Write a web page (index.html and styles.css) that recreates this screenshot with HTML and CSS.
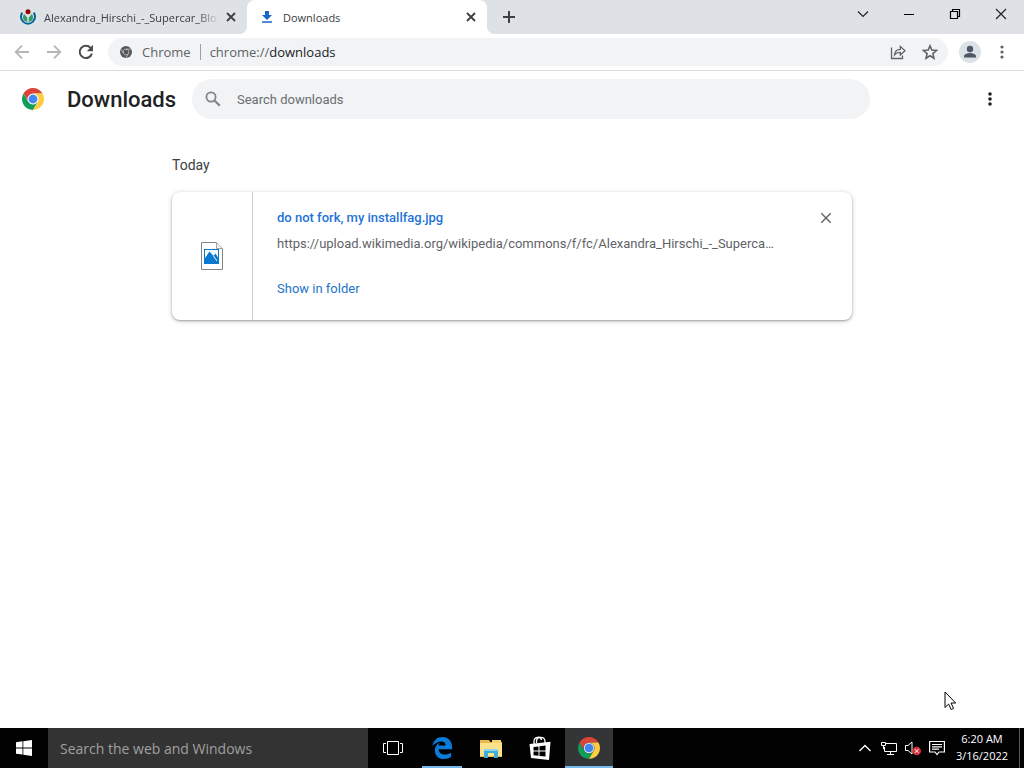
FILE: index.html
```html
<!DOCTYPE html>
<html lang="en">
<head>
    <meta charset="UTF-8">
    <meta name="viewport" content="width=device-width, initial-scale=1.0">
    <title>Downloads</title>
    <link rel="stylesheet" href="styles.css">
</head>
<body>
    <svg class="sprite" aria-hidden="true">
        <symbol id="chrome-logo" viewBox="2 2 44 44">
            <path fill="#db4437" d="M43.05 13H24A11 11 0 0 0 14.47 29.5L4.95 13A22 22 0 0 1 43.05 13Z"/>
            <path fill="#0f9d58" d="M4.95 13L14.47 29.5A11 11 0 0 0 33.53 29.5L24 46A22 22 0 0 1 4.95 13Z"/>
            <path fill="#ffcd40" d="M24 46L33.53 29.5A11 11 0 0 0 24 13H43.05A22 22 0 0 1 24 46Z"/>
            <circle cx="24" cy="24" r="10.5" fill="#e4e9f2"/>
            <circle cx="24" cy="24" r="8.6" fill="#4285f4"/>
        </symbol>
    </svg>

    <header class="tab-strip">
        <div class="tab tab-first">
            <svg class="icon-16" viewBox="0 0 16 16">
                <circle cx="8" cy="2.8" r="2.5" fill="#900"/>
                <path d="M2.3 3.6A7 7 0 1 0 13.7 3.6" fill="none" stroke="#069" stroke-width="2"/>
                <path d="M4.2 5A4.7 4.7 0 0 0 7.3 13V8.800Z M11.8 5A4.7 4.7 0 0 1 8.7 13V8.800Z" fill="#396"/>
            </svg>
            <a class="tab-title tab-fade" href="#">Alexandra_Hirschi_-_Supercar_Blondie</a>
            <button class="tab-close" aria-label="Close tab">
                <svg class="icon-16" viewBox="0 0 16 16"><path d="M4 4l8 8M12 4l-8 8" stroke="#3c4043" stroke-width="1.8"/></svg>
            </button>
        </div>
        <div class="tab tab-active">
            <svg class="icon-16" viewBox="0 0 16 16"><path d="M6 2h4v4h3l-5 5-5-5h3zM3 12.2h10v1.6H3z" fill="#1967c8"/></svg>
            <a class="tab-title" href="#">Downloads</a>
            <button class="tab-close" aria-label="Close tab">
                <svg class="icon-16" viewBox="0 0 16 16"><path d="M4 4l8 8M12 4l-8 8" stroke="#3c4043" stroke-width="1.8"/></svg>
            </button>
        </div>
        <button class="new-tab" aria-label="New tab">
            <svg class="icon-16" viewBox="0 0 16 16"><path d="M8 2v12M2 8h12" stroke="#3c4043" stroke-width="2"/></svg>
        </button>
        <div class="window-controls">
            <button aria-label="Search tabs"><svg class="icon-16" viewBox="0 0 16 16"><path d="M3 5.5l5 5 5-5" fill="none" stroke="#222" stroke-width="1.2"/></svg></button>
            <button aria-label="Minimize"><svg class="icon-16" viewBox="0 0 16 16"><path d="M3 8.5h10" stroke="#000"/></svg></button>
            <button aria-label="Restore"><svg class="icon-16" viewBox="0 0 16 16"><path d="M3.5 5.5h7v7h-7zM5.5 5.5v-2h7v7h-2" fill="none" stroke="#000" stroke-width="1.2"/></svg></button>
            <button aria-label="Close"><svg class="icon-16" viewBox="0 0 16 16"><path d="M3 3l10 10M13 3L3 13" stroke="#222" stroke-width="1.2"/></svg></button>
        </div>
    </header>

    <nav class="toolbar">
        <button class="tool" aria-label="Back"><svg class="icon-16" viewBox="0 0 16 16"><path d="M15 8H2M8 1.7L1.7 8 8 14.3" fill="none" stroke="#b4b6b9" stroke-width="1.8"/></svg></button>
        <button class="tool" aria-label="Forward"><svg class="icon-16" viewBox="0 0 16 16"><path d="M1 8h13M8 1.7L14.3 8 8 14.3" fill="none" stroke="#b4b6b9" stroke-width="1.8"/></svg></button>
        <button class="tool" aria-label="Reload"><svg class="icon-16" viewBox="0 0 16 16"><path d="M13.9 9.5A6.2 6.2 0 1 1 12.6 3.8" fill="none" stroke="#4a4d51" stroke-width="2"/><path d="M15 .8v6.4H8.8z" fill="#4a4d51"/></svg></button>
        <div class="omnibox">
            <svg class="site-icon" viewBox="2 2 44 44">
                <circle cx="24" cy="24" r="22" fill="#54585c"/>
                <path d="M43 13.5H24A10.5 10.5 0 0 0 14.9 29.3L5.4 13.2M33.1 29.3L24 45.5M14.9 29.3A10.5 10.5 0 0 0 33.1 29.3A10.5 10.5 0 0 0 24 13.5" fill="none" stroke="#f1f3f4" stroke-width="2"/>
            </svg>
            <span class="site-name">Chrome</span>
            <label class="scheme" for="address">chrome://</label>
            <input class="address" id="address" type="text" value="downloads">
            <button class="tool" aria-label="Share"><svg class="icon-16" viewBox="0 0 16 16"><path d="M1.5 3.5v11h11v-3M4.5 10.8C5 7 7.3 5.4 10.3 5.3V2.4L15 6.8l-4.7 4.3V8.3C7.8 8.2 6 9 4.5 10.8Z" fill="none" stroke="#5f6368" stroke-width="1.3"/></svg></button>
            <button class="tool" aria-label="Bookmark this tab"><svg class="icon-16" viewBox="0 0 16 16"><path d="M8 1.8l1.8 4.3 4.7.4-3.6 3.1 1.1 4.6L8 11.7l-4 2.5 1.1-4.6L1.5 6.5l4.7-.4z" fill="none" stroke="#5f6368" stroke-width="1.6"/></svg></button>
        </div>
        <button class="tool" aria-label="Profile">
            <svg class="avatar" viewBox="0 0 22 22"><circle cx="11" cy="11" r="11" fill="#dde1e8"/><circle cx="11" cy="8" r="3.2" fill="#4d5766"/><path d="M5 16.5v-1.3c0-2.2 4-3.2 6-3.2s6 1 6 3.2v1.3z" fill="#4d5766"/></svg>
        </button>
        <button class="tool" aria-label="Menu"><svg class="icon-16" viewBox="0 0 16 16" fill="#5f6368"><circle cx="8" cy="3" r="1.6"/><circle cx="8" cy="8" r="1.6"/><circle cx="8" cy="13" r="1.6"/></svg></button>
    </nav>

    <main class="page">
        <div class="page-header">
            <svg class="logo"><use href="#chrome-logo"/></svg>
            <h1>Downloads</h1>
            <label class="search">
                <svg class="icon-16" viewBox="0 0 16 16"><circle cx="6" cy="6" r="4.6" fill="none" stroke="#80868b" stroke-width="1.8"/><path d="M9.5 9.5l5.3 5.3" stroke="#80868b" stroke-width="2.2"/></svg>
                <input type="search" placeholder="Search downloads" aria-label="Search downloads">
            </label>
            <button class="tool more" aria-label="More actions"><svg class="icon-16" viewBox="0 0 16 16" fill="#202124"><circle cx="8" cy="3" r="1.8"/><circle cx="8" cy="8" r="1.8"/><circle cx="8" cy="13" r="1.8"/></svg></button>
        </div>

        <section class="downloads">
            <h2>Today</h2>
            <article class="card">
                <div class="card-icon">
                    <svg class="file-icon" viewBox="0 0 22 28">
                        <path d="M.5.5h15l6 6v21H.5z" fill="#fff" stroke="#808588"/>
                        <path d="M15.5.5v6h6" fill="#f1f1f1" stroke="#a0a4a6"/>
                        <path d="M3 7h15v15H3z" fill="#0b78d0"/>
                        <path d="M4 8h13v7.5L14.5 11.5l-2 2.5L8.5 9.5 4 16z" fill="#f5faff"/>
                        <path d="M12.5 14l3.5 5" stroke="#f5faff"/>
                    </svg>
                </div>
                <div class="card-body">
                    <a class="file-name" href="#">do not fork, my installfag.jpg</a>
                    <a class="file-url" href="#">https://upload.wikimedia.org/wikipedia/commons/f/fc/Alexandra_Hirschi_-_Superca…</a>
                    <a class="show-folder" href="#">Show in folder</a>
                </div>
                <button class="remove" aria-label="Remove from list"><svg class="icon-16" viewBox="0 0 16 16"><path d="M3.3 3.3l9.4 9.4M12.7 3.3l-9.4 9.4" stroke="#5f6368" stroke-width="1.4"/></svg></button>
            </article>
        </section>
    </main>

    <footer class="taskbar">
        <button class="task" aria-label="Start"><svg class="icon-16" viewBox="0 0 16 16" fill="#fff"><path d="M0 2.2l6.5-.9v6.2H0zM7.3 1.2L16 0v7.5H7.3zM0 8.4h6.5v6.2L0 13.8zM7.3 8.4H16V16l-8.7-1.2z"/></svg></button>
        <input class="task-search" type="text" placeholder="Search the web and Windows" aria-label="Search the web and Windows">
        <div class="task-list">
            <button class="task" aria-label="Task view"><svg width="20" height="16" viewBox="0 0 20 16"><path d="M4.5 1.5h11v13h-11zM3 3.5H.5v9H3M17 3.5h2.5v9H17" fill="none" stroke="#fff"/></svg></button>
            <button class="task task-edge" aria-label="Microsoft Edge"><svg class="icon-22" viewBox="1 1 22 23"><path fill="#0a7bd8" d="M2 10.5C3 4.5 7 1 12.5 1 19 1 22.5 6 22.5 11v2.7H8.5c.2 3.6 3 5.600 6.5 5.600 2.5 0 4.8-.7 6.5-1.900V22c-2 1.200-4.500 2-7.500 2-6 0-9.500-4-9.500-9 0-3.500 1.700-6.400 5-8-.8 1-1.100 2-1.200 2.800h7.500c0-2.800-1.600-4.200-4.300-4.200-4 0-7.500 2.200-9.500 4.900z"/></svg></button>
            <button class="task" aria-label="File Explorer"><svg class="icon-22" viewBox="0 0 22 22"><path fill="#e9b94f" d="M0 3h9l1.5 2H22v15H0z"/><path fill="#fbe28b" d="M0 6h22v13H0z"/><path fill="#f6d36f" d="M12 3h9v3h-9z"/><path fill="#3aaed8" d="M4 12h14v9h-4v-5H8v5H4z"/><path fill="#8bd5ee" d="M4 12h14v2H4z"/></svg></button>
            <button class="task" aria-label="Store"><svg class="icon-24" viewBox="0 0 24 24"><path d="M6 8V5.5C6 1 12.5-.5 13.5 4M8.5 7V5C9 0 16.5.5 17 5v2" fill="none" stroke="#fff" stroke-width="1.3"/><path fill="#fff" d="M1.500 8L22.500 5.800 21 24 3 22z"/><path fill="#000" d="M5.500 11l5-.6v4.200h-5zM11.500 10.300l6-.7v5h-6zM5.500 15.600h5v4.200l-5-.6zM11.500 15.600h6v5l-6-.7z"/></svg></button>
            <button class="task task-current" aria-label="Google Chrome"><svg class="icon-22"><use href="#chrome-logo"/></svg></button>
        </div>
        <div class="tray">
            <button aria-label="Show hidden icons"><svg class="icon-16" viewBox="0 0 16 16"><path d="M2.5 11L8 5.5l5.5 5.5" fill="none" stroke="#fff" stroke-width="1.3"/></svg></button>
            <button aria-label="Network"><svg class="icon-16" viewBox="0 0 16 16"><path d="M5 3.5h10.5v8H3.5V7M9.5 11.5v3M6 14.5h7M.5 2.5h4v3h-4zM2.5 5.5V9" fill="none" stroke="#fff"/></svg></button>
            <button aria-label="Volume muted"><svg class="icon-16" viewBox="0 0 16 16"><path d="M.5 5.5H3L7 2v12L3 10.5H.5z" fill="none" stroke="#fff"/><circle cx="11.7" cy="11" r="4.3" fill="#d9303e"/><path d="M9.8 9.1l3.8 3.8M13.6 9.1l-3.8 3.8" stroke="#fff"/></svg></button>
            <button aria-label="Notifications"><svg class="icon-16" viewBox="0 0 16 16"><path d="M.6 1.5h14.8V12H10l-2 2.5L6 12H.6zM3 4.5h10M3 6.8h10M3 9.2h7" fill="none" stroke="#fff" stroke-width="1.2"/></svg></button>
        </div>
        <time class="clock" datetime="2022-03-16T06:20"><span>6:20 AM</span><span>3/16/2022</span></time>
        <button class="show-desktop" aria-label="Show desktop"></button>
    </footer>

    <svg class="cursor" viewBox="0 0 13 20"><path d="M1 1v15.5l3.6-3.4 2.6 5.5 2.400-1.200L7 12h4.700z" fill="#fff" stroke="#000"/></svg>
</body>
</html>
```
FILE: styles.css
```css
* {
    box-sizing: border-box;
}
body {
    margin: 0;
    height: 100vh;
    display: flex;
    flex-direction: column;
    background: #fff;
    color: #202124;
    font-family: Roboto, sans-serif;
    font-size: 13px;
    overflow: hidden;
}
button {
    display: flex;
    align-items: center;
    justify-content: center;
    flex: none;
    padding: 0;
    border: none;
    background: none;
}
input {
    min-width: 0;
    padding: 0;
    border: none;
    outline: none;
    background: none;
}
a {
    text-decoration: none;
}
svg {
    display: block;
    flex: none;
}
.sprite {
    position: absolute;
    width: 0;
    height: 0;
}
.icon-16 {
    width: 16px;
    height: 16px;
}
.icon-22 {
    width: 22px;
    height: 22px;
}
.icon-24 {
    width: 24px;
    height: 24px;
}

/* tab strip */
.tab-strip {
    display: flex;
    flex: none;
    height: 34px;
    background: #dee1e6;
}
.tab {
    display: flex;
    align-items: center;
    gap: 8px;
    width: 240px;
    padding: 0 8px 0 12px;
    font-family: "Open Sans", sans-serif;
    font-size: 11px;
}
.tab-first {
    width: 247px;
    padding-left: 20px;
}
.tab-active {
    position: relative;
    background: #fff;
    border-radius: 8px 8px 0 0;
}
.tab-active::before,
.tab-active::after {
    content: "";
    position: absolute;
    bottom: 0;
    width: 8px;
    height: 8px;
}
.tab-active::before {
    right: 100%;
    background: radial-gradient(circle at 0 0, transparent 8px, #fff 8px);
}
.tab-active::after {
    left: 100%;
    background: radial-gradient(circle at 100% 0, transparent 8px, #fff 8px);
}
.tab-title {
    flex: 1;
    overflow: hidden;
    white-space: nowrap;
    color: #3c4043;
}
.tab-fade {
    margin-right: -4px;
    mask-image: linear-gradient(to right, #000 88%, transparent 100%);
}
.new-tab {
    width: 44px;
}
.window-controls {
    display: flex;
    margin-left: auto;
    height: 28px;
}
.window-controls button {
    width: 46px;
}

/* toolbar */
.toolbar {
    display: flex;
    flex: none;
    align-items: center;
    height: 37px;
    padding: 0 6px;
    border-bottom: 1px solid #dadce0;
}
.tool {
    width: 32px;
    height: 28px;
}
.omnibox {
    display: flex;
    flex: 1;
    align-items: center;
    height: 28px;
    margin: 0 6px;
    padding: 0 2px 0 12px;
    border-radius: 14px;
    background: #f1f3f4;
    font-family: "Open Sans", sans-serif;
    font-size: 13px;
    color: #5f6368;
}
.site-icon {
    width: 12px;
    height: 12px;
    margin-right: 10px;
}
.site-name {
    padding-right: 9px;
    border-right: 1px solid #9aa0a6;
    line-height: 16px;
}
.scheme {
    padding-left: 9px;
}
.address {
    flex: 1;
    font-family: inherit;
    font-size: 13px;
    color: #202124;
}
.avatar {
    width: 22px;
    height: 22px;
}

/* downloads page */
.page {
    flex: 1;
    min-height: 0;
    overflow: hidden;
}
.page-header {
    display: flex;
    align-items: center;
    height: 56px;
    padding: 0 18px 0 22px;
}
.logo {
    width: 22px;
    height: 22px;
    margin-right: 23px;
}
h1 {
    margin: 0;
    width: 125px;
    font-size: 22px;
    font-weight: 500;
}
.search {
    display: flex;
    flex: 1;
    align-items: center;
    gap: 16px;
    max-width: 678px;
    height: 40px;
    margin-right: 16px;
    padding: 0 13px;
    border-radius: 20px;
    background: #f1f3f4;
}
.search input {
    flex: 1;
    font-family: Roboto, sans-serif;
    font-size: 13px;
}
.search input::placeholder {
    color: #6b6f74;
}
.more {
    margin-left: auto;
}
.downloads {
    max-width: 680px;
    margin: 0 auto;
    padding-top: 28px;
}
h2 {
    margin: 0 0 17px;
    font-size: 14px;
    font-weight: 400;
    line-height: 20px;
    color: #3c4043;
}
.card {
    display: flex;
    min-height: 128px;
    border-radius: 8px;
    background: #fff;
    box-shadow: 0 1px 2px rgba(60, 64, 67, 0.4), 0 1px 4px 1px rgba(60, 64, 67, 0.16);
}
.card-icon {
    display: flex;
    flex: none;
    align-items: center;
    justify-content: center;
    width: 81px;
    border-right: 1px solid #d0d1d3;
}
.file-icon {
    width: 22px;
    height: 28px;
}
.card-body {
    display: flex;
    flex: 1;
    flex-direction: column;
    align-items: flex-start;
    min-width: 0;
    padding: 16px 0 16px 24px;
    line-height: 20px;
}
.file-name {
    font-weight: 500;
    color: #2474d8;
}
.file-url {
    max-width: 100%;
    margin-top: 6px;
    overflow: hidden;
    white-space: nowrap;
    text-overflow: ellipsis;
    color: #5f6368;
}
.show-folder {
    margin-top: 25px;
    color: #2474c8;
}
.remove {
    width: 32px;
    height: 32px;
    margin: 10px 10px 0 32px;
}

/* taskbar */
.taskbar {
    display: flex;
    flex: none;
    height: 40px;
    background: #020203;
    color: #fff;
    font-family: "Open Sans", sans-serif;
}
.task {
    width: 48px;
}
.task-search {
    width: 320px;
    padding: 0 12px;
    background: #333;
    font-family: inherit;
    font-size: 14px;
}
.task-search::placeholder {
    color: #a0a0a0;
}
.task-list {
    display: flex;
    gap: 1px;
    padding-left: 1px;
}
.task-edge {
    background: linear-gradient(#76b9ed, #76b9ed) center bottom / 40px 2px no-repeat;
}
.task-current {
    background: #343536;
    border-bottom: 2px solid #76b9ed;
    padding-top: 2px;
}
.tray {
    display: flex;
    gap: 8px;
    margin-left: auto;
}
.clock {
    display: flex;
    flex-direction: column;
    justify-content: center;
    align-items: center;
    width: 74px;
    padding-bottom: 2px;
    font-size: 11px;
    line-height: 17px;
}
.show-desktop {
    width: 5px;
    border-left: 1px solid #55585a;
}
.cursor {
    position: absolute;
    left: 944px;
    top: 691px;
    width: 13px;
    height: 20px;
}
```
